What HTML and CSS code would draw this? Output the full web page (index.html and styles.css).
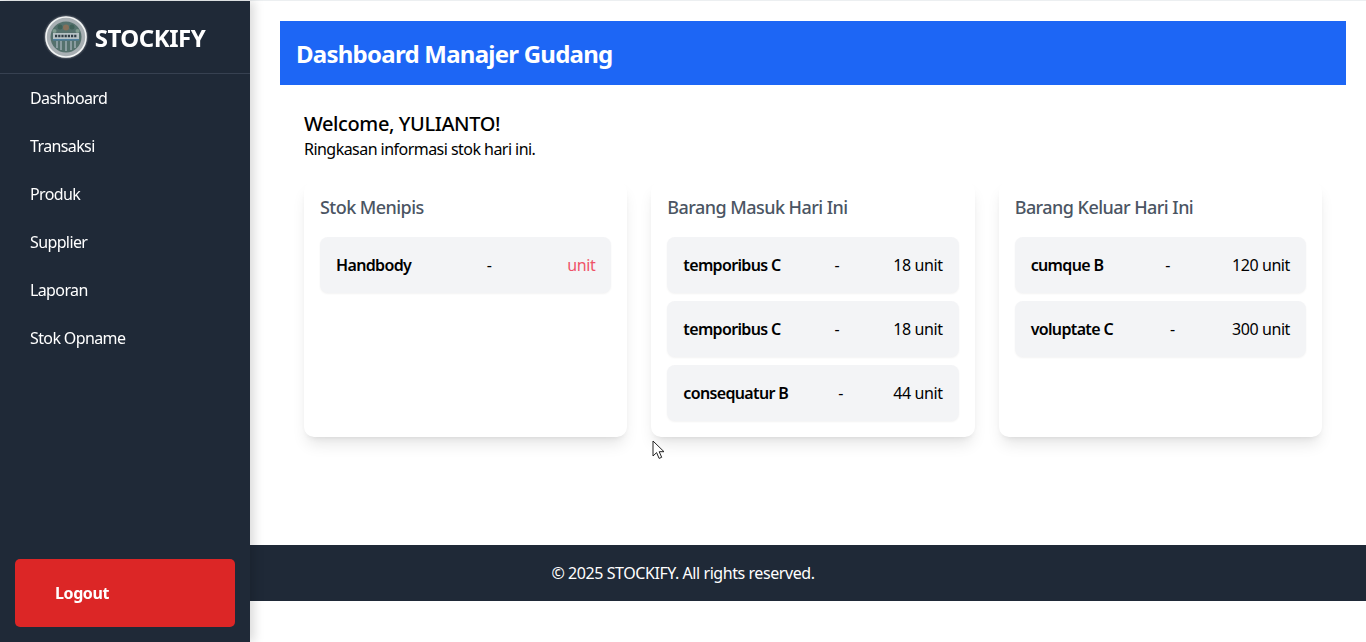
FILE: index.html
```html
<!DOCTYPE html>
<html lang="en">
<head>
    <meta charset="UTF-8">
    <title>Dashboard Manajer Gudang</title>
    <link rel="stylesheet" href="styles.css">
</head>
<body>
    <aside class="sidebar">
        <div class="brand">
            <svg class="brand-logo" viewBox="0 0 42 42" width="42" height="42">
                <circle cx="21" cy="21" r="20" fill="#a8afb3" stroke="#f2f4f4" stroke-width="1.6"/>
                <circle cx="21" cy="21" r="15.5" fill="#55716d"/>
                <circle cx="15" cy="11" r="2.5" fill="#3f6058"/>
                <circle cx="27" cy="11" r="2.5" fill="#3f6058"/>
                <circle cx="21" cy="11.5" r="3" fill="#86705a"/>
                <circle cx="9.5" cy="15" r="2" fill="#7d9a8e"/>
                <circle cx="32.5" cy="15" r="2" fill="#7d9a8e"/>
                <rect x="8" y="17" width="26" height="6" fill="#b6c1c4"/>
                <rect x="8" y="23" width="26" height="1.5" fill="#4d7fa0"/>
                <path d="M10 20h22" stroke="#2f3d46" stroke-width="2.4" stroke-dasharray="2.2 1"/>
                <path d="M12 25v7M16 25v9M21 25v10M26 25v9M30 25v7" stroke="#8a9ca0" stroke-width="2"/>
            </svg>
            <span class="brand-name">STOCKIFY</span>
        </div>
        <nav class="nav">
            <a class="nav-link" href="#">Dashboard</a>
            <a class="nav-link" href="#">Transaksi</a>
            <a class="nav-link" href="#">Produk</a>
            <a class="nav-link" href="#">Supplier</a>
            <a class="nav-link" href="#">Laporan</a>
            <a class="nav-link" href="#">Stok Opname</a>
        </nav>
        <button class="logout">Logout</button>
    </aside>

    <div class="page">
        <main class="main">
            <header class="page-header">
                <h1>Dashboard Manajer Gudang</h1>
            </header>
            <section class="content">
                <h2 class="welcome">Welcome, YULIANTO!</h2>
                <p class="summary">Ringkasan informasi stok hari ini.</p>
                <div class="cards">
                    <div class="card">
                        <h3>Stok Menipis</h3>
                        <div class="row">
                            <strong>Handbody</strong>
                            <span>-</span>
                            <span class="low">unit</span>
                        </div>
                    </div>
                    <div class="card">
                        <h3>Barang Masuk Hari Ini</h3>
                        <div class="row">
                            <strong>temporibus C</strong>
                            <span>-</span>
                            <span>18 unit</span>
                        </div>
                        <div class="row">
                            <strong>temporibus C</strong>
                            <span>-</span>
                            <span>18 unit</span>
                        </div>
                        <div class="row">
                            <strong>consequatur B</strong>
                            <span>-</span>
                            <span>44 unit</span>
                        </div>
                    </div>
                    <div class="card">
                        <h3>Barang Keluar Hari Ini</h3>
                        <div class="row">
                            <strong>cumque B</strong>
                            <span>-</span>
                            <span>120 unit</span>
                        </div>
                        <div class="row">
                            <strong>voluptate C</strong>
                            <span>-</span>
                            <span>300 unit</span>
                        </div>
                    </div>
                </div>
            </section>
        </main>
        <footer class="footer">© 2025 STOCKIFY. All rights reserved.</footer>
    </div>

    <svg class="cursor" viewBox="0 0 14 20" width="14" height="20">
        <path d="M1 1v15l3.6-3.4 2.5 5.8 2.6-1.1-2.5-5.6H12z" fill="#fff" stroke="#222" stroke-width="1"/>
    </svg>
</body>
</html>
```

FILE: styles.css
```css
* {
    box-sizing: border-box;
}

body {
    margin: 0;
    height: 642px;
    overflow: hidden;
    background-color: #fff;
    color: #000;
    font-family: "Noto Sans", "Open Sans", sans-serif;
    font-size: 16px;
    border-top: 1px solid #eceff1;
}

.sidebar {
    position: fixed;
    top: 1px;
    left: 0;
    bottom: 0;
    width: 250px;
    display: flex;
    flex-direction: column;
    background-color: #1f2937;
    color: #fff;
    box-shadow: 4px 0 10px rgba(0, 0, 0, 0.15);
    z-index: 2;
}

.brand {
    height: 73px;
    display: flex;
    align-items: center;
    justify-content: center;
    gap: 8px;
    border-bottom: 1px solid #374151;
}

.brand-logo {
    filter: drop-shadow(0 0 1px rgba(255, 255, 255, 0.6));
}

.brand-name {
    font-size: 24px;
    font-weight: 700;
    letter-spacing: -0.5px;
}

.nav {
    flex: 1;
    display: flex;
    flex-direction: column;
}

.nav-link {
    height: 48px;
    padding-left: 30px;
    display: flex;
    align-items: center;
    color: #fff;
    font-size: 16px;
    letter-spacing: -0.62px;
    text-decoration: none;
}

.logout {
    height: 68px;
    margin: 0 15px 15px;
    padding-left: 40px;
    text-align: left;
    background-color: #dc2626;
    color: #fff;
    border: none;
    border-radius: 5px;
    font-family: inherit;
    font-size: 16px;
    font-weight: 700;
    letter-spacing: -0.4px;
}

.main {
    padding: 20px 20px 0 280px;
    height: 544px;
}

.page-header {
    height: 64px;
    padding-left: 16px;
    display: flex;
    align-items: center;
    background-color: #1d66f5;
    color: #fff;
}

.page-header h1 {
    margin: 0;
    font-size: 24px;
    font-weight: 700;
    letter-spacing: -0.75px;
}

.content {
    padding: 27px 24px 0;
}

.welcome {
    margin: 0;
    font-size: 20px;
    font-weight: 500;
    line-height: 24px;
    letter-spacing: -0.4px;
}

.summary {
    margin: 1px 0 0;
    font-size: 16px;
    line-height: 24px;
    letter-spacing: -0.54px;
}

.cards {
    margin-top: 20px;
    display: grid;
    grid-template-columns: repeat(3, 1fr);
    gap: 24px;
}

.card {
    height: 256px;
    padding: 14px 16px 16px;
    background-color: #fff;
    border-radius: 10px;
    box-shadow: 0 10px 15px -3px rgba(0, 0, 0, 0.1), 0 4px 6px -4px rgba(0, 0, 0, 0.1);
}

.card h3 {
    margin: 0 0 18px;
    color: #4b5563;
    font-size: 18px;
    font-weight: 500;
    line-height: 24px;
    letter-spacing: -0.55px;
}

.row {
    height: 56px;
    margin-bottom: 8px;
    padding: 0 16px;
    display: flex;
    align-items: center;
    justify-content: space-between;
    background-color: #f3f4f6;
    border-radius: 8px;
    box-shadow: 0 1px 2px rgba(0, 0, 0, 0.05);
    font-size: 16px;
    letter-spacing: -0.4px;
}

.row strong {
    font-weight: 600;
    letter-spacing: -0.65px;
}

.low {
    color: #ef5368;
}

.footer {
    height: 56px;
    display: flex;
    align-items: center;
    justify-content: center;
    background-color: #1f2937;
    color: #fff;
    font-size: 16px;
    letter-spacing: -0.43px;
}

.cursor {
    position: absolute;
    left: 652px;
    top: 440px;
    z-index: 3;
}
```
